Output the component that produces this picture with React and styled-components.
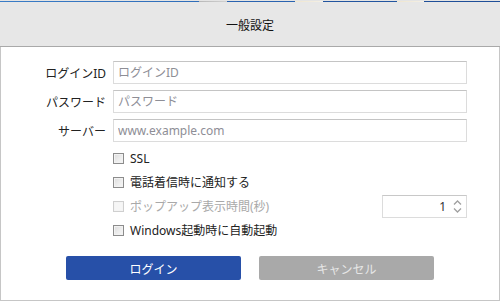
import React from 'react'
import styled, { createGlobalStyle } from 'styled-components'

const Global = createGlobalStyle`
  html, body {
    margin: 0;
    padding: 0;
    background: #ffffff;
  }
  body {
    font-family: "Noto Sans", "Noto Sans CJK JP", sans-serif;
    font-size: 12px;
    color: #222;
  }
`

const Window = styled.div`
  width: 500px;
  height: 301px;
  box-sizing: border-box;
  display: flex;
  flex-direction: column;
  background: #fff;
`

const TopStrip = styled.div`
  height: 2px;
  background: linear-gradient(to bottom, #e4e4e4 0 1px, transparent 1px),
    linear-gradient(
      to right,
      #3a7cc6 0,
      #2f6db9 199px,
      #b8b8b8 199px,
      #d0d0d0 227px,
      #2a63b0 227px,
      #2a63b0 295px,
      #efe6cf 295px,
      #f4f0e6 323px,
      #23559f 323px,
      #23559f 397px,
      #efe6cf 397px,
      #f4f0e6 424px,
      #1f4f98 424px
    );
`

const Header = styled.header`
  height: 44px;
  background: #e7e7e7;
  border-bottom: 1px solid #a9a9a9;
  display: flex;
  align-items: center;
  justify-content: center;
`

const Title = styled.h1`
  margin: 0;
  font-family: "Noto Sans CJK JP", sans-serif;
  font-size: 12px;
  font-weight: 400;
  color: #111;
`

const Body = styled.main`
  flex: 1;
  border: 1px solid #c6c6c6;
  border-top: none;
  padding: 14px 32px 0 0;
  display: flex;
  flex-direction: column;
`

const Form = styled.div`
  display: grid;
  grid-template-columns: 105px 1fr;
  column-gap: 7px;
  row-gap: 6px;
`

const Label = styled.label`
  text-align: right;
  align-self: center;
  color: #222;
`

const Input = styled.input`
  height: 23px;
  box-sizing: border-box;
  border: 1px solid #dcdcdc;
  border-top-color: #c4c4c4;
  padding: 0 4px;
  font-family: "Noto Sans", "Noto Sans CJK JP", sans-serif;
  font-size: 12px;
  color: #222;
  outline: none;
  &::placeholder {
    color: #8e8e96;
  }
`

const Options = styled.div`
  margin-top: 4px;
  margin-left: 112px;
  display: flex;
  flex-direction: column;
`

const OptionRow = styled.div`
  height: 24px;
  display: flex;
  align-items: center;
  justify-content: space-between;
`

const Check = styled.span`
  display: inline-flex;
  align-items: center;
  gap: 6px;
  color: ${(p) => (p.disabled ? '#a9a9a9' : '#222')};
`

const Box = styled.span`
  width: 11px;
  height: 11px;
  box-sizing: border-box;
  border: 1px solid ${(p) => (p.disabled ? '#cfcfcf' : '#8c8c8c')};
  background: ${(p) =>
    p.disabled
      ? '#f6f6f6'
      : 'linear-gradient(135deg, #dcdcdc 0%, #eeeeee 60%, #f6f6f6 100%)'};
  box-shadow: inset 0 0 0 1px ${(p) => (p.disabled ? '#f4f4f4' : '#f2f2f2')};
`

const Spinner = styled.div`
  width: 85px;
  height: 23px;
  box-sizing: border-box;
  border: 1px solid #dcdcdc;
  border-top-color: #c8c8c8;
  display: flex;
  align-items: center;
  justify-content: flex-end;
  gap: 7px;
  padding-right: 4px;
  color: #333;
`

const Arrows = styled.span`
  display: flex;
  flex-direction: column;
  gap: 3px;
`

const Buttons = styled.div`
  margin-top: 14px;
  margin-right: -32px;
  display: flex;
  justify-content: center;
  gap: 18px;
`

const Button = styled.button`
  width: 175px;
  height: 24px;
  border: none;
  border-radius: 2px;
  font-family: "Noto Sans CJK JP", sans-serif;
  font-size: 12px;
  background: ${(p) => (p.primary ? '#2750a8' : '#a9a9a9')};
  color: ${(p) => (p.primary ? '#ffffff' : '#e6e6e6')};
`

const Chevron = ({ up }) => (
  <svg width="9" height="5" viewBox="0 0 9 5">
    <path
      d={up ? 'M1 4.5 L4.5 1 L8 4.5' : 'M1 0.5 L4.5 4 L8 0.5'}
      fill="none"
      stroke="#a0a0a0"
      strokeWidth="1.3"
    />
  </svg>
)

const Option = ({ label, disabled }) => (
  <Check disabled={disabled}>
    <Box disabled={disabled} />
    {label}
  </Check>
)

export default function App() {
  return (
    <Window>
      <Global />
      <TopStrip />
      <Header>
        <Title>一般設定</Title>
      </Header>
      <Body>
        <Form>
          <Label>ログインID</Label>
          <Input placeholder="ログインID" />
          <Label>パスワード</Label>
          <Input placeholder="パスワード" />
          <Label>サーバー</Label>
          <Input placeholder="www.example.com" />
        </Form>
        <Options>
          <OptionRow>
            <Option label="SSL" />
          </OptionRow>
          <OptionRow>
            <Option label="電話着信時に通知する" />
          </OptionRow>
          <OptionRow>
            <Option label="ポップアップ表示時間(秒)" disabled />
            <Spinner>
              1
              <Arrows>
                <Chevron up />
                <Chevron />
              </Arrows>
            </Spinner>
          </OptionRow>
          <OptionRow>
            <Option label="Windows起動時に自動起動" />
          </OptionRow>
        </Options>
        <Buttons>
          <Button primary>ログイン</Button>
          <Button>キャンセル</Button>
        </Buttons>
      </Body>
    </Window>
  )
}
